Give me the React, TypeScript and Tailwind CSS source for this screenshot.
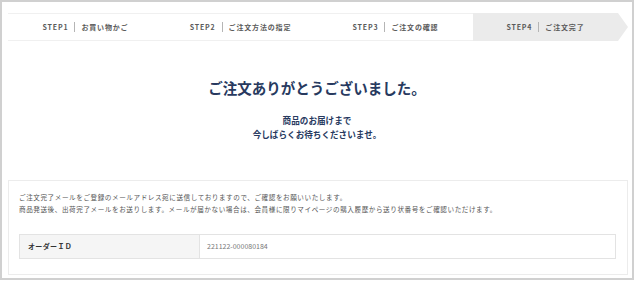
import React from "react";

const jp = { fontFamily: '"Noto Sans CJK JP", "Noto Sans", sans-serif' };

const steps = [
  { no: "STEP1", label: "お買い物かご" },
  { no: "STEP2", label: "ご注文方法の指定" },
  { no: "STEP3", label: "ご注文の確認" },
  { no: "STEP4", label: "ご注文完了" },
];

function StepText({ no, label }: { no: string; label: string }) {
  return (
    <span className="flex items-center text-[7px] font-bold tracking-[0.12em] text-[#5a5a5a]">
      <span>{no}</span>
      <span className="mx-[6px] h-[10px] w-px bg-[#b5b5b5]" />
      <span>{label}</span>
    </span>
  );
}

export default function App() {
  return (
    <div className="w-[634px] h-[281px] bg-white" style={jp}>
      <div className="h-[280px] w-[634px] border-2 border-[#d0d0d0] px-[6px] pt-[11px]">
        {/* Step bar */}
        <div className="flex w-[620px]">
          {steps.slice(0, 3).map((s) => (
            <div
              key={s.no}
              className="flex h-[28px] w-[155px] items-center justify-center border-y border-[#f0f0f0]"
            >
              <StepText no={s.no} label={s.label} />
            </div>
          ))}
          <div className="flex h-[28px] w-[155px] items-center justify-center bg-[#ebebeb] pr-[10px] [clip-path:polygon(0_0,calc(100%_-_10px)_0,100%_50%,calc(100%_-_10px)_100%,0_100%)]">
            <StepText no={steps[3].no} label={steps[3].label} />
          </div>
        </div>

        {/* Thanks */}
        <div className="mt-[37px] text-center text-[#283a5f]">
          <h1 className="text-[14.5px] font-bold leading-[20px]">ご注文ありがとうございました。</h1>
          <p className="mt-[16px] text-[8.6px] font-bold leading-[13.5px]">
            商品のお届けまで
            <br />
            今しばらくお待ちくださいませ。
          </p>
        </div>

        {/* Notice box */}
        <div className="mt-[39px] w-[620px] border border-[#ececec] px-[10px] pt-[10px] pb-[15px]">
          <p className="text-[6.6px] leading-[12px] tracking-[0.085em] text-[#555555]">
            ご注文完了メールをご登録のメールアドレス宛に送信しておりますので、ご確認をお願いいたします。
            <br />
            商品発送後、出荷完了メールをお送りします。メールが届かない場合は、会員様に限りマイページの購入履歴から送り状番号をご確認いただけます。
          </p>
          <div className="mt-[19px] flex h-[25px] w-[597px] border border-[#e3e3e3]">
            <div className="flex w-[180px] items-center border-r border-[#e3e3e3] bg-[#f5f5f5] pl-[8px] text-[7px] font-bold tracking-[0.05em] text-[#333333]">
              オーダーＩＤ
            </div>
            <div className="flex flex-1 items-center pl-[7px] text-[7px] text-[#777777]">
              221122-000080184
            </div>
          </div>
        </div>
      </div>
    </div>
  );
}
